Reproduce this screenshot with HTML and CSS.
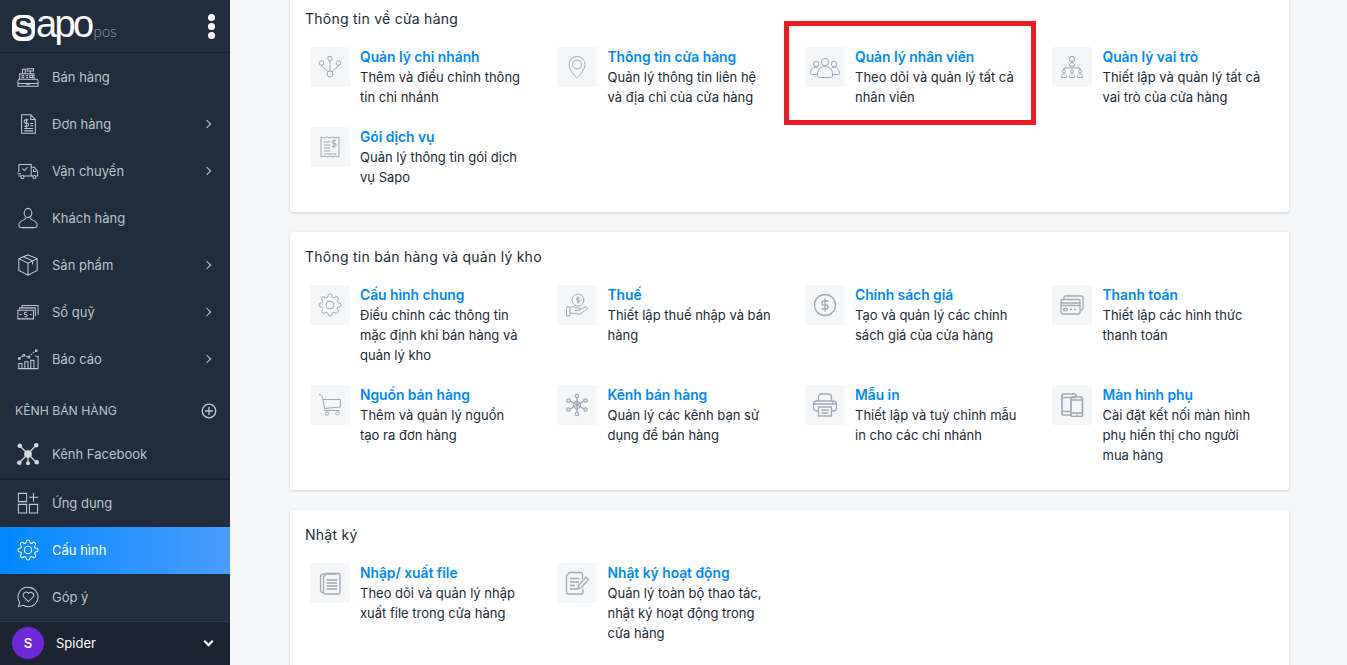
FILE: index.html
```html
<!DOCTYPE html>
<html lang="vi">
<head>
	<meta charset="UTF-8">
	<title>Cấu hình</title>
	<link rel="stylesheet" href="styles.css">
</head>
<body>
	<div id="wrap">
		<aside class="side">
			<div class="brand">
				<div class="logo"><span class="logoS">S</span><span class="logoApo">apo</span><span class="logoPos">pos</span></div>
				<div class="dots"><i></i><i></i><i></i></div>
			</div>
			<ul class="nav">
				<li>
					<svg class="navIco" viewBox="0 0 24 24"><path d="M2 14.500h20l1 2v5.500h-22v-5.500z"/><path d="M1 19h22M10 20.500h4"/><path d="M3 14.500v-6h15.500v6M6 8.500v-5h3v5M11 3h7v2.500h-7zM14.500 5.500v3"/><path d="M5 10.500h3M10 10.500h2M14 10h3v2.500h-3zM5 12.500h3M10 12.500h2"/></svg>
					<span>Bán hàng</span>
				</li>
				<li>
					<svg class="navIco" viewBox="0 0 24 24"><path d="M5 2h10l5 5v15h-15zM15 2v5h5"/><path d="M12.500 7.500h-3a1.500 1.500 0 0 0 0 3.500h1.300a1.500 1.500 0 0 1 0 3.500h-3M10.200 6v10M14.500 11.500h3M14.500 14h3M8 17h9.500M8 19.500h9.500"/></svg>
					<span>Đơn hàng</span><b class="arrow"></b>
				</li>
				<li>
					<svg class="navIco" viewBox="0 0 24 24"><path d="M2 5h13.500v12.500h-8M2 5v8M15.500 8h3.500l3.500 4.500v5h-1.500M15.500 17.500h2M6 9.500l2 2 3.500-3.500M0.500 15h4M1.500 17.500h3"/><circle cx="6" cy="18.500" r="1.700"/><circle cx="19" cy="18.500" r="1.700"/><path d="M18 10v2.500h3"/></svg>
					<span>Vận chuyển</span><b class="arrow"></b>
				</li>
				<li>
					<svg class="navIco" viewBox="0 0 24 24"><ellipse cx="12" cy="6.500" rx="4.200" ry="5"/><path d="M9 11.500v1.500c0 1-7 2-7 6.500 0 2 2 3 4 3h12c2 0 4-1 4-3 0-4.500-7-5.500-7-6.500v-1.500"/></svg>
					<span>Khách hàng</span>
				</li>
				<li>
					<svg class="navIco" viewBox="0 0 24 24"><path d="M12 1l10 4v13l-10 5-10-5v-13zM2 5l10 5 10-5M12 10v13M7 3l10 4.500v4"/></svg>
					<span>Sản phẩm</span><b class="arrow"></b>
				</li>
				<li>
					<svg class="navIco" viewBox="0 0 24 24"><path d="M1 10h17v9.500h-17zM3 10v-2.500h17v9M5.500 7.500v-2.500h17.500v10"/><path d="M3 14.800h2M14 14.800h2M10.800 12.300h-1.600a1 1 0 0 0 0 2.500h.6a1 1 0 0 1 0 2.500h-1.600"/></svg>
					<span>Sổ quỹ</span><b class="arrow"></b>
				</li>
				<li>
					<svg class="navIco" viewBox="0 0 24 24"><path d="M1 22.500h22M2 17h3.500v5.500h-3.500zM8.500 15h3.500v7.500h-3.500zM15 13.500h3.500v9h-3.500zM20 9h3v13.500"/><path d="M2.500 11.500l5-3.500 5 2 6-5.500 2.500-1.500" stroke-dasharray="2 1"/><circle cx="2.500" cy="11.500" r="1"/><circle cx="7.500" cy="8" r="1"/><circle cx="13" cy="10" r="1"/><circle cx="21" cy="3" r="1"/></svg>
					<span>Báo cáo</span><b class="arrow"></b>
				</li>
			</ul>
			<div class="sectionRow">
				<span>KÊNH BÁN HÀNG</span>
				<svg class="plusIco" viewBox="0 0 16 16"><circle cx="8" cy="8" r="6.800"/><path d="M8 4v8M4 8h8"/></svg>
			</div>
			<ul class="nav navLine">
				<li>
					<svg class="navIco fbIco" viewBox="0 0 24 24"><path d="M3 3l9 9M21 2l-9 10M12 12l-9 9M12 12l9 9M12 12v10"/><circle cx="12" cy="12" r="3.500"/><circle cx="3" cy="3" r="1.800"/><circle cx="21" cy="2.500" r="1.800"/><circle cx="2.500" cy="21.500" r="1.800"/><circle cx="21.500" cy="21" r="1.800"/><circle cx="12" cy="22" r="1.500"/></svg>
					<span>Kênh Facebook</span>
				</li>
			</ul>
			<ul class="nav navBottom">
				<li>
					<svg class="navIco" viewBox="0 0 24 24"><path d="M1.500 1.500h9v9h-9zM1.500 13.500h9v9.500h-9zM13.500 13.500h9v9.500h-9zM18 1v9.500M13 5.800h10"/></svg>
					<span>Ứng dụng</span>
				</li>
				<li class="on">
					<svg class="navIco" viewBox="0 0 24 24"><circle cx="12" cy="12" r="4"/><path d="M19.400 15a1.650 1.650 0 0 0 .33 1.820l.06.06a2 2 0 0 1 0 2.830 2 2 0 0 1-2.830 0l-.06-.06a1.650 1.650 0 0 0-1.820-.33 1.650 1.650 0 0 0-1 1.510V21a2 2 0 0 1-2 2 2 2 0 0 1-2-2v-.09A1.650 1.650 0 0 0 9 19.400a1.650 1.650 0 0 0-1.820.33l-.06.06a2 2 0 0 1-2.830 0 2 2 0 0 1 0-2.830l.06-.06a1.650 1.650 0 0 0 .33-1.820 1.650 1.650 0 0 0-1.510-1H3a2 2 0 0 1-2-2 2 2 0 0 1 2-2h.09A1.650 1.650 0 0 0 4.600 9a1.650 1.650 0 0 0-.33-1.820l-.06-.06a2 2 0 0 1 0-2.830 2 2 0 0 1 2.830 0l.06.06a1.650 1.650 0 0 0 1.820.33H9a1.650 1.650 0 0 0 1-1.510V3a2 2 0 0 1 2-2 2 2 0 0 1 2 2v.09a1.650 1.650 0 0 0 1 1.510 1.650 1.650 0 0 0 1.820-.33l.06-.06a2 2 0 0 1 2.830 0 2 2 0 0 1 0 2.830l-.06.06a1.650 1.650 0 0 0-.33 1.820V9a1.650 1.650 0 0 0 1.510 1H21a2 2 0 0 1 2 2 2 2 0 0 1-2 2h-.09a1.650 1.650 0 0 0-1.510 1z"/></svg>
					<span>Cấu hình</span>
				</li>
				<li>
					<svg class="navIco" viewBox="0 0 24 24"><path d="M12.500 1.500a10.500 10.500 0 1 1-5.500 19.500l-5.500 1.500 1.500-4.500a10.500 10.500 0 0 1 9.500-16.500z"/><path d="M12.500 17l-5-5a3 3 0 0 1 5-4 3 3 0 0 1 5 4z"/></svg>
					<span>Góp ý</span>
				</li>
			</ul>
			<div class="user">
				<div class="avatar">S</div>
				<span class="userName">Spider</span>
				<b class="arrow arrowDown"></b>
			</div>
		</aside>

		<main class="main">
			<section class="card">
				<h2>Thông tin về cửa hàng</h2>
				<div class="grid">
					<a class="item">
						<div class="icon"><svg viewBox="0 0 24 24"><circle cx="3.500" cy="8" r="2.300"/><circle cx="12" cy="3.500" r="2.300"/><circle cx="20.500" cy="8" r="2.300"/><circle cx="12" cy="19" r="3"/><path d="M12 5.800v10.200M4 10.300c.5 3.500 4.500 3.500 6 6.500M20 10.300c-.5 3.500-4.500 3.500-6 6.500"/></svg></div>
						<div class="txt"><h3>Quản lý chi nhánh</h3><p>Thêm và điều chỉnh thông tin chi nhánh</p></div>
					</a>
					<a class="item">
						<div class="icon"><svg viewBox="0 0 24 24"><path d="M12 23s-8-7.500-8-13.500a8 8 0 0 1 16 0c0 6-8 13.500-8 13.500z"/><circle cx="12" cy="9.500" r="4.500"/></svg></div>
						<div class="txt"><h3>Thông tin cửa hàng</h3><p>Quản lý thông tin liên hệ và địa chỉ của cửa hàng</p></div>
					</a>
					<a class="item">
						<div class="mark"></div>
						<div class="icon"><svg class="wide" viewBox="0 0 30 24"><circle cx="15" cy="7" r="3.600"/><path d="M7.500 21v-2c0-4 3-7.500 7.500-7.500s7.500 3.500 7.500 7.500v2c0 1-1 1.500-2 1.500h-11c-1 0-2-.5-2-1.500z"/><circle cx="6" cy="9" r="2.700"/><circle cx="24" cy="9" r="2.700"/><path d="M8.500 13c-1-.7-1.500-1-2.500-1-3 0-5.500 3-5.500 6.500 0 .8.500 1 1 1h6M21.500 13c1-.7 1.500-1 2.500-1 3 0 5.500 3 5.500 6.500 0 .8-.5 1-1 1h-6"/></svg></div>
						<div class="txt"><h3>Quản lý nhân viên</h3><p>Theo dõi và quản lý tất cả nhân viên</p></div>
					</a>
					<a class="item">
						<div class="icon"><svg viewBox="0 0 24 24"><circle cx="12" cy="4" r="2.700"/><path d="M9.500 11c0-2 1-3.500 2.500-3.500s2.500 1.500 2.500 3.500zM12 11v3M4 15v-2h16v2"/><circle cx="4" cy="16.500" r="1.500"/><circle cx="12" cy="16.500" r="1.500"/><circle cx="20" cy="16.500" r="1.500"/><path d="M1.500 22.500c0-2.500 1-4 2.500-4s2.500 1.500 2.500 4zM9.500 22.500c0-2.500 1-4 2.500-4s2.500 1.500 2.500 4zM17.500 22.500c0-2.500 1-4 2.500-4s2.500 1.500 2.500 4z"/></svg></div>
						<div class="txt"><h3>Quản lý vai trò</h3><p>Thiết lập và quản lý tất cả vai trò của cửa hàng</p></div>
					</a>
					<a class="item">
						<div class="icon"><svg viewBox="0 0 24 24"><path d="M3 2l3 1 3-1 3 1 3-1 3 1 3-1v20l-3-1-3 1-3-1-3 1-3-1-3 1z"/><path d="M6 7h6M6 10h6M6 13h6M6 16h6M6 19h12"/><path d="M18 5.500h-2.500a1.300 1.300 0 0 0 0 2.900h1a1.300 1.300 0 0 1 0 2.900h-2.500M16 4v9"/></svg></div>
						<div class="txt"><h3>Gói dịch vụ</h3><p>Quản lý thông tin gói dịch vụ Sapo</p></div>
					</a>
				</div>
			</section>

			<section class="card">
				<h2>Thông tin bán hàng và quản lý kho</h2>
				<div class="grid">
					<a class="item">
						<div class="icon"><svg viewBox="0 0 24 24"><circle cx="12" cy="12" r="4"/><path d="M19.400 15a1.650 1.650 0 0 0 .33 1.820l.06.06a2 2 0 0 1 0 2.830 2 2 0 0 1-2.830 0l-.06-.06a1.650 1.650 0 0 0-1.820-.33 1.650 1.650 0 0 0-1 1.510V21a2 2 0 0 1-2 2 2 2 0 0 1-2-2v-.09A1.650 1.650 0 0 0 9 19.400a1.650 1.650 0 0 0-1.820.33l-.06.06a2 2 0 0 1-2.830 0 2 2 0 0 1 0-2.830l.06-.06a1.650 1.650 0 0 0 .33-1.820 1.650 1.650 0 0 0-1.510-1H3a2 2 0 0 1-2-2 2 2 0 0 1 2-2h.09A1.650 1.650 0 0 0 4.600 9a1.650 1.650 0 0 0-.33-1.820l-.06-.06a2 2 0 0 1 0-2.830 2 2 0 0 1 2.830 0l.06.06a1.650 1.650 0 0 0 1.820.33H9a1.650 1.650 0 0 0 1-1.510V3a2 2 0 0 1 2-2 2 2 0 0 1 2 2v.09a1.650 1.650 0 0 0 1 1.510 1.650 1.650 0 0 0 1.820-.33l.06-.06a2 2 0 0 1 2.830 0 2 2 0 0 1 0 2.830l-.06.06a1.650 1.650 0 0 0-.33 1.820V9a1.650 1.650 0 0 0 1.510 1H21a2 2 0 0 1 2 2 2 2 0 0 1-2 2h-.09a1.650 1.650 0 0 0-1.510 1z"/></svg></div>
						<div class="txt"><h3>Cấu hình chung</h3><p>Điều chỉnh các thông tin mặc định khi bán hàng và quản lý kho</p></div>
					</a>
					<a class="item">
						<div class="icon"><svg viewBox="0 0 24 24"><circle cx="13" cy="7" r="6"/><path d="M14.500 4.800h-2.200a1.100 1.100 0 0 0 0 2.200h1.400a1.100 1.100 0 0 1 0 2.200h-2.200M13 3.500v7"/><path d="M1.500 14h3.500v9h-3.500zM5 15c2-1.500 4-1.500 6 0h3c1.500 0 1.500 2.500 0 2.500h-4M14.500 16.500l6-2.500c2-.7 3 1 1.500 2l-6 4.500c-1 .6-2 .7-3 .5l-8-1"/></svg></div>
						<div class="txt"><h3>Thuế</h3><p>Thiết lập thuế nhập và bán hàng</p></div>
					</a>
					<a class="item">
						<div class="icon"><svg viewBox="0 0 24 24"><circle cx="12" cy="12" r="10.500" class="thick"/><path d="M15.500 8h-4.500a2 2 0 0 0 0 4h2a2 2 0 0 1 0 4h-4.500M12 5.500v13" class="thick"/></svg></div>
						<div class="txt"><h3>Chính sách giá</h3><p>Tạo và quản lý các chính sách giá của cửa hàng</p></div>
					</a>
					<a class="item">
						<div class="icon"><svg viewBox="0 0 24 24"><path d="M4 6v-1.500a1.500 1.500 0 0 1 1.500-1.500h16a1.500 1.500 0 0 1 1.500 1.500v11a1.500 1.500 0 0 1-1.500 1.500h-1.500" class="thick"/><rect x="1" y="6.500" width="19" height="14.500" rx="1.500" class="thick"/><path d="M1 10h19M1 12.500h19M10 16.500h2M14 16.500h2" class="thick"/><ellipse cx="5.500" cy="16.500" rx="2" ry="1.300" class="thick"/></svg></div>
						<div class="txt"><h3>Thanh toán</h3><p>Thiết lập các hình thức thanh toán</p></div>
					</a>
					<a class="item">
						<div class="icon"><svg viewBox="0 0 24 24"><path d="M1 1.500c2 .5 3 1 3.500 3l2.500 13h14.500M5 6.500h17.500v7.500l-16.500 1.500"/><circle cx="9" cy="20.500" r="1.700"/><circle cx="19.500" cy="20.500" r="1.700"/></svg></div>
						<div class="txt"><h3>Nguồn bán hàng</h3><p>Thêm và quản lý nguồn tạo ra đơn hàng</p></div>
					</a>
					<a class="item">
						<div class="icon"><svg viewBox="0 0 24 24"><path d="M12 12v-8M12 12v8M12 12l-7-4M12 12l7-4M12 12l-7 4M12 12l7 4" class="thick"/><circle cx="12" cy="12" r="3.500" class="thick"/><circle cx="12" cy="3" r="1.700" class="thick"/><circle cx="12" cy="21" r="1.700" class="thick"/><circle cx="3.500" cy="7.500" r="1.700" class="thick"/><circle cx="20.500" cy="7.500" r="1.700" class="thick"/><circle cx="3.500" cy="16.500" r="1.700" class="thick"/><circle cx="20.500" cy="16.500" r="1.700" class="thick"/></svg></div>
						<div class="txt"><h3>Kênh bán hàng</h3><p>Quản lý các kênh bạn sử dụng để bán hàng</p></div>
					</a>
					<a class="item">
						<div class="icon"><svg viewBox="0 0 24 24"><path d="M5.500 8v-4a3 3 0 0 1 3-3h7a3 3 0 0 1 3 3v4" class="thick"/><path d="M5.500 18h-2a3 3 0 0 1-3-3v-4a3 3 0 0 1 3-3h17a3 3 0 0 1 3 3v4a3 3 0 0 1-3 3h-2M.500 11h23M19 10h1.500" class="thick"/><path d="M5.500 14h13v9h-13zM8.500 17h7M8.500 20h7" class="thick"/></svg></div>
						<div class="txt"><h3>Mẫu in</h3><p>Thiết lập và tuỳ chỉnh mẫu in cho các chi nhánh</p></div>
					</a>
					<a class="item">
						<div class="icon"><svg viewBox="0 0 24 24"><path d="M16 3v-.500a1.500 1.500 0 0 0-1.500-1.500h-11a1.500 1.500 0 0 0-1.500 1.500v18a1.500 1.500 0 0 0 1.500 1.500h7M2 4.500h14M2 18.500h8" class="heavy"/><rect x="11" y="4" width="11.500" height="19.500" rx="1.500" class="heavy"/><path d="M11 7h11.500M11 20h11.500M16 22h1.500" class="heavy"/></svg></div>
						<div class="txt"><h3>Màn hình phụ</h3><p>Cài đặt kết nối màn hình phụ hiển thị cho người mua hàng</p></div>
					</a>
				</div>
			</section>

			<section class="card">
				<h2>Nhật ký</h2>
				<div class="grid">
					<a class="item">
						<div class="icon"><svg viewBox="0 0 24 24"><path d="M5 21.500c-1.500 0-2.500-1-2.500-2.500v-13c0-2 1-3 3-3h13" class="thick"/><path d="M8 2.500h12.500a1.500 1.500 0 0 1 1.500 1.500v17.500a1.500 1.500 0 0 1-1.500 1.500h-13a2 2 0 0 1-2-2v-15z" class="thick"/><path d="M8.500 9h10.500M8.500 12h10.500M8.500 15h10.500M8.500 18h10.500" class="thick"/></svg></div>
						<div class="txt"><h3>Nhập/ xuất file</h3><p>Theo dõi và quản lý nhập xuất file trong cửa hàng</p></div>
					</a>
					<a class="item">
						<div class="icon"><svg viewBox="0 0 24 24"><path d="M17.500 8v-4.500a2 2 0 0 0-2-2h-11l-3 3v16.500a2 2 0 0 0 2 2h12.500a2 2 0 0 0 2-2v-3" class="thick"/><path d="M5 7.500h9M5 11h9M5 14.500h5M5 18h7" class="thick"/><path d="M13 18l1-4 7-8 2.500 2.500-7 8z" class="thick"/></svg></div>
						<div class="txt"><h3>Nhật ký hoạt động</h3><p>Quản lý toàn bộ thao tác, nhật ký hoạt động trong cửa hàng</p></div>
					</a>
				</div>
			</section>
		</main>
	</div>
</body>
</html>
```

FILE: styles.css
```css
* {
	box-sizing: border-box;
}
html,
body {
	margin: 0;
	height: 100%;
	overflow: hidden;
}
body {
	font: 13px/20px Inter, "Liberation Sans", sans-serif;
	color: #212b36;
	background: #f4f6f8;
}
ul {
	list-style: none;
	margin: 0;
	padding: 0;
}
h2,
h3,
p {
	margin: 0;
}
#wrap {
	display: flex;
	height: 665px;
	overflow: hidden;
}

/* left menu */
.side {
	flex: none;
	display: flex;
	flex-direction: column;
	width: 230px;
	height: 665px;
	background: #212d3d;
	color: #bcc3cc;
	font-size: 13px;
}
.brand {
	display: flex;
	align-items: center;
	justify-content: space-between;
	height: 54px;
	padding: 0 15px 0 12px;
	border-bottom: 1px solid #18222e;
}
.logo {
	display: flex;
	align-items: baseline;
	color: #fff;
	margin-top: -2px;
}
.logoS {
	display: block;
	width: 23px;
	height: 26px;
	background: #fff;
	border-radius: 8px;
	color: #212d3d;
	font: 700 27px/26px "Liberation Sans", sans-serif;
	text-align: center;
}
.logoApo {
	margin-left: 1px;
	font: 400 38px/30px "Liberation Sans", sans-serif;
	letter-spacing: -2.6px;
}
.logoPos {
	margin-left: 2px;
	color: #8f98a4;
	font: 300 14px/14px "Open Sans", sans-serif;
}
.dots i {
	display: block;
	width: 7px;
	height: 7px;
	margin: 2px 0;
	border-radius: 50%;
	background: #fff;
}
.nav li {
	display: flex;
	align-items: center;
	height: 47px;
	padding: 0 17px;
}
.navIco {
	flex: none;
	width: 22px;
	height: 22px;
	margin-right: 13px;
	fill: none;
	stroke: #c3c9d1;
	stroke-width: 1.1;
}
.fbIco {
	fill: #d5d9de;
	stroke: #d5d9de;
	stroke-width: 1.4;
}
.arrow {
	width: 6px;
	height: 6px;
	margin-left: auto;
	margin-right: 3px;
	border-top: 1.5px solid #c3c9d1;
	border-right: 1.5px solid #c3c9d1;
	transform: rotate(45deg);
}
.sectionRow {
	display: flex;
	align-items: center;
	justify-content: space-between;
	height: 49px;
	padding: 9px 13px 0 15px;
	font-size: 12.2px;
}
.plusIco {
	width: 16px;
	height: 16px;
	fill: none;
	stroke: #c3c9d1;
	stroke-width: 1.300;
}
.navLine {
	height: 49px;
	border-bottom: 2px solid #18222e;
}
.nav .on {
	background: linear-gradient(90deg, #0088ff, #4a9dff);
	color: #fff;
}
.on .navIco {
	stroke: #fff;
}
.user {
	display: flex;
	align-items: center;
	height: 45px;
	padding: 0 15px 0 12px;
	border-top: 1px solid #2c3b4f;
	background: #1b2430;
	color: #fff;
}
.avatar {
	width: 32px;
	height: 32px;
	margin-right: 12px;
	border-radius: 50%;
	background: #6f27d9;
	font-weight: 600;
	font-size: 13px;
	line-height: 32px;
	text-align: center;
}
.arrowDown {
	width: 7px;
	height: 7px;
	margin-top: -4px;
	margin-right: 3px;
	transform: rotate(135deg);
	border-color: #fff;
	border-width: 2px;
}

/* right content */
.main {
	flex: 1;
	margin-top: -6px;
	padding-left: 60px;
	padding-right: 58px;
}
.card {
	width: 999px;
	margin-bottom: 20px;
	padding: 15px 4px 5px 4.75px;
	background: #fff;
	border-radius: 3px;
	box-shadow: 0 1px 3px rgba(63, 63, 68, .2);
}
.card h2 {
	height: 38px;
	padding-left: 10.25px;
	font-size: 14px;
	font-weight: 400;
	letter-spacing: .25px;
	line-height: 20px;
}
.grid {
	display: grid;
	grid-template-columns: repeat(4, 247.5px);
}
.item {
	position: relative;
	display: flex;
	padding: 0 15px 20px;
}
.icon {
	flex: none;
	display: flex;
	align-items: center;
	justify-content: center;
	width: 40px;
	height: 40px;
	margin-right: 10.25px;
	background: #f4f6f8;
}
.icon svg {
	width: 24px;
	height: 24px;
	fill: none;
	stroke: #a1a9b4;
	stroke-width: 1;
}
.icon .wide {
	width: 30px;
}
.icon .thick {
	stroke-width: 1.300;
}
.icon .heavy {
	stroke-width: 1.700;
}
.txt {
	min-width: 0;
	max-width: 165px;
}
.txt h3 {
	color: #0088ff;
	font-size: 13.8px;
	font-weight: 600;
	line-height: 20px;
}
.txt p {
	color: #212b36;
}

/* red box drawn on the screenshot */
.mark {
	position: absolute;
	left: -6px;
	top: -26px;
	width: 252px;
	height: 104px;
	border: 5px solid #ed1c24;
}
```
